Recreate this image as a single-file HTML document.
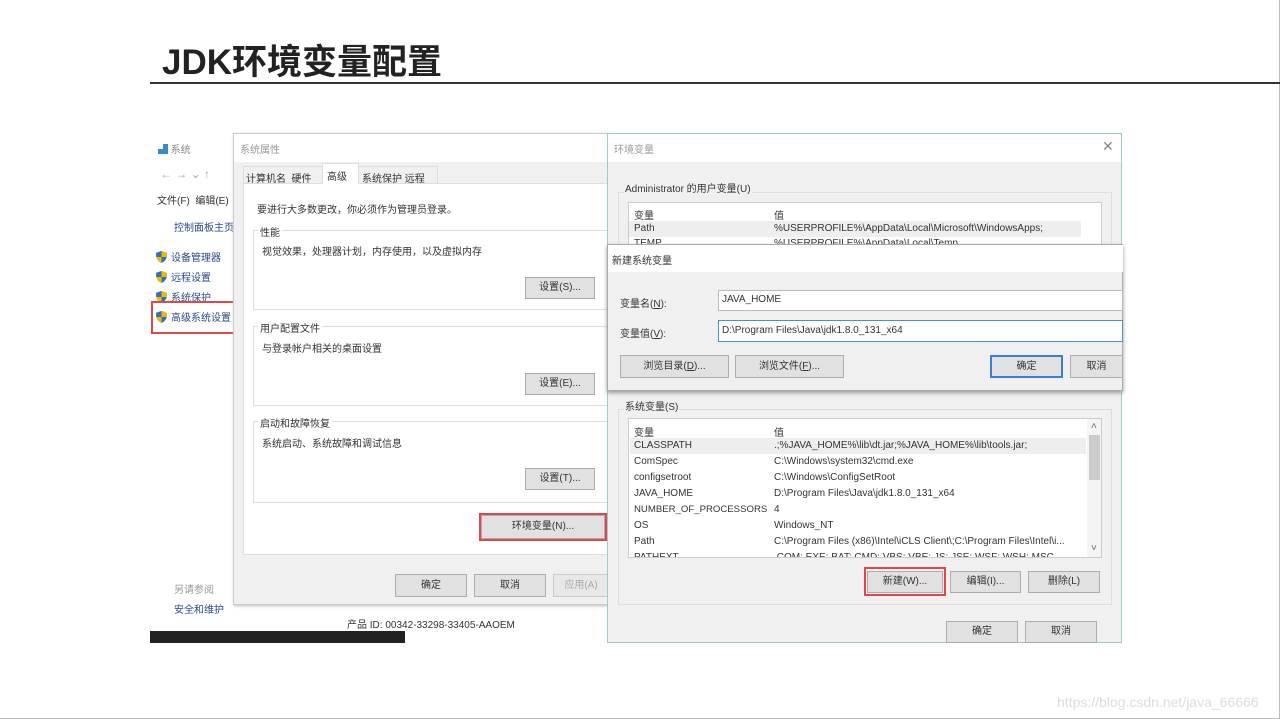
<!DOCTYPE html>
<html><head><meta charset="utf-8"><style>
*{margin:0;padding:0;box-sizing:border-box}
body{width:1280px;height:719px;position:relative;background:#fff;overflow:hidden;font-family:"Liberation Sans","Noto Sans CJK SC",sans-serif;font-size:10px;color:#222}
.a{position:absolute}
.btn{position:absolute;background:#e1e1e1;border:1px solid #adadad;text-align:center;font-size:10px;color:#333}
.t{position:absolute;white-space:nowrap;font-size:10px;color:#333}
.red{position:absolute;border:2px solid #e0474c}
.sh{display:inline-block;width:11px;height:12px;vertical-align:-2px;margin-right:4px}
</style></head><body>
<div class="a" style="left:0;top:0;width:1280px;height:719px;border:1px solid #bbb;border-left:none;border-top:none"></div>
<div class="t" style="left:162px;top:34px;font-size:35px;font-weight:bold;color:#222;letter-spacing:0px">JDK环境变量配置</div>
<div class="a" style="left:150px;top:82px;width:1130px;height:2px;background:#333"></div>

<!-- left panel -->
<div class="a" style="left:150px;top:133px;width:84px;height:510px;background:#fff"></div>
<div class="t" style="left:158px;top:141px;color:#888"><span style="color:#3a8ac8">▟</span> 系统</div>
<div class="t" style="left:160px;top:167px;color:#aaa;font-size:12px">← → ⌄ ↑</div>
<div class="t" style="left:157px;top:192px">文件(F)&nbsp; 编辑(E)</div>
<div class="t" style="left:174px;top:219px;color:#2a4a8a">控制面板主页</div>
<svg width="0" height="0" style="position:absolute"><defs><symbol id="s" viewBox="0 0 11 12"><path d="M5.5 0 L11 2 L10.5 7 Q9 10.5 5.5 12 Q2 10.5 0.5 7 L0 2 Z" fill="#2f6fc0"/><path d="M5.5 0 L11 2 L10.8 6 L5.5 6 Z" fill="#f2b800"/><path d="M0 2 L5.5 0 L5.5 6 L0.3 6Z" fill="#2f6fc0"/><path d="M0.3 6 L5.5 6 L5.5 12 Q2 10.5 0.5 7Z" fill="#f2b800"/></symbol></defs></svg>
<div class="t" style="left:156px;top:249px;color:#2a4a8a"><svg class="sh"><use href="#s"/></svg>设备管理器</div>
<div class="t" style="left:156px;top:269px;color:#2a4a8a"><svg class="sh"><use href="#s"/></svg>远程设置</div>
<div class="t" style="left:156px;top:289px;color:#2a4a8a"><svg class="sh"><use href="#s"/></svg>系统保护</div>
<div class="t" style="left:156px;top:309px;color:#2a4a8a"><svg class="sh"><use href="#s"/></svg>高级系统设置</div>
<div class="red" style="left:151px;top:301px;width:97px;height:33px"></div>
<div class="t" style="left:174px;top:581px;color:#999">另请参阅</div>
<div class="t" style="left:174px;top:601px;color:#2a4a8a">安全和维护</div>
<div class="a" style="left:150px;top:631px;width:255px;height:12px;background:#222"></div>
<div class="t" style="left:347px;top:616px">产品 ID: 00342-33298-33405-AAOEM</div>

<!-- system properties -->
<div class="a" style="left:233px;top:133px;width:376px;height:472px;background:#f0f0f0;border:1px solid #ccc;box-shadow:1px 1px 3px #bbb"></div>
<div class="a" style="left:234px;top:134px;width:374px;height:28px;background:#fff"></div>
<div class="t" style="left:240px;top:141px;color:#999">系统属性</div>
<div class="a" style="left:243px;top:183px;width:365px;height:372px;background:#fff;border:1px solid #ddd"></div>
<div class="a" style="left:243px;top:166px;width:195px;height:18px;background:#f0f0f0;border:1px solid #ddd"></div>
<div class="a" style="left:322px;top:163px;width:37px;height:21px;background:#fff;border:1px solid #ddd;border-bottom:none"></div>
<div class="t" style="left:246px;top:170px">计算机名&nbsp; 硬件</div>
<div class="t" style="left:327px;top:168px">高级</div>
<div class="t" style="left:362px;top:170px">系统保护 远程</div>
<div class="t" style="left:257px;top:201px">要进行大多数更改，你必须作为管理员登录。</div>
<div class="a" style="left:253px;top:230px;width:355px;height:80px;border:1px solid #ddd"></div>
<div class="t" style="left:258px;top:224px;background:#fff;padding:0 2px">性能</div>
<div class="t" style="left:262px;top:243px">视觉效果，处理器计划，内存使用，以及虚拟内存</div>
<div class="btn" style="left:525px;top:277px;width:70px;height:22px;line-height:20px">设置(S)...</div>
<div class="a" style="left:253px;top:326px;width:355px;height:80px;border:1px solid #ddd"></div>
<div class="t" style="left:258px;top:320px;background:#fff;padding:0 2px">用户配置文件</div>
<div class="t" style="left:262px;top:340px">与登录帐户相关的桌面设置</div>
<div class="btn" style="left:525px;top:373px;width:70px;height:22px;line-height:20px">设置(E)...</div>
<div class="a" style="left:253px;top:421px;width:355px;height:82px;border:1px solid #ddd"></div>
<div class="t" style="left:258px;top:415px;background:#fff;padding:0 2px">启动和故障恢复</div>
<div class="t" style="left:262px;top:435px">系统启动、系统故障和调试信息</div>
<div class="btn" style="left:525px;top:468px;width:70px;height:22px;line-height:20px">设置(T)...</div>
<div class="btn" style="left:481px;top:515px;width:124px;height:24px;line-height:22px">环境变量(N)...</div>
<div class="red" style="left:479px;top:513px;width:128px;height:28px"></div>
<div class="btn" style="left:395px;top:574px;width:72px;height:23px;line-height:21px">确定</div>
<div class="btn" style="left:474px;top:574px;width:72px;height:23px;line-height:21px">取消</div>
<div class="btn" style="left:553px;top:574px;width:56px;height:23px;line-height:21px;color:#aaa;background:#e8e8e8;border-color:#ccc">应用(A)</div>

<!-- env vars dialog -->
<div class="a" style="left:607px;top:133px;width:515px;height:510px;background:#f0f0f0;border:1px solid #9cc"></div>
<div class="a" style="left:608px;top:134px;width:513px;height:28px;background:#fff"></div>
<div class="t" style="left:614px;top:141px;color:#999">环境变量</div>
<div class="t" style="left:1102px;top:138px;color:#888;font-size:14px">✕</div>
<div class="a" style="left:618px;top:192px;width:494px;height:60px;border:1px solid #ddd"></div>
<div class="t" style="left:624px;top:180px;background:#f0f0f0;padding:0 1px">Administrator 的用户变量(U)</div>
<div class="a" style="left:628px;top:202px;width:474px;height:48px;background:#fff;border:1px solid #ccc"></div>
<div class="t" style="left:634px;top:207px">变量</div><div class="t" style="left:774px;top:207px">值</div>
<div class="a" style="left:629px;top:221px;width:452px;height:16px;background:#eee"></div>
<div class="t" style="left:634px;top:223px">Path</div><div class="t" style="left:774px;top:223px">%USERPROFILE%\AppData\Local\Microsoft\WindowsApps;</div>
<div class="t" style="left:634px;top:238px">TEMP</div><div class="t" style="left:774px;top:238px">%USERPROFILE%\AppData\Local\Temp</div>

<!-- new var dialog -->
<div class="a" style="left:607px;top:244px;width:516px;height:147px;background:#f0f0f0;border:1px solid #aaa;box-shadow:0 2px 4px #999"></div>
<div class="a" style="left:608px;top:245px;width:515px;height:27px;background:#fff"></div>
<div class="t" style="left:612px;top:252px">新建系统变量</div>
<div class="t" style="left:620px;top:295px">变量名(<u>N</u>):</div>
<div class="t" style="left:620px;top:325px">变量值(<u>V</u>):</div>
<div class="a" style="left:718px;top:290px;width:405px;height:21px;background:#fff;border:1px solid #bbb"></div>
<div class="t" style="left:722px;top:294px">JAVA_HOME</div>
<div class="a" style="left:718px;top:320px;width:405px;height:22px;background:#fff;border:1px solid #4a90d0"></div>
<div class="t" style="left:722px;top:325px">D:\Program Files\Java\jdk1.8.0_131_x64</div>
<div class="btn" style="left:620px;top:355px;width:109px;height:23px;line-height:21px">浏览目录(<u>D</u>)...</div>
<div class="btn" style="left:735px;top:355px;width:109px;height:23px;line-height:21px">浏览文件(<u>F</u>)...</div>
<div class="btn" style="left:990px;top:355px;width:73px;height:23px;line-height:19px;border:2px solid #3a80d0">确定</div>
<div class="btn" style="left:1070px;top:355px;width:53px;height:23px;line-height:21px">取消</div>

<!-- system vars -->
<div class="a" style="left:618px;top:409px;width:494px;height:196px;border:1px solid #ddd"></div>
<div class="t" style="left:624px;top:398px;background:#f0f0f0;padding:0 1px">系统变量(S)</div>
<div class="a" style="left:628px;top:418px;width:474px;height:140px;background:#fff;border:1px solid #ccc;overflow:hidden">
<div class="a" style="left:1px;top:19px;width:456px;height:16px;background:#eee"></div>
<div class="a" style="left:458px;top:0;width:15px;height:140px;background:#f4f4f4"></div>
<div class="a" style="left:460px;top:16px;width:11px;height:45px;background:#ccc"></div>
<div class="t" style="left:462px;top:2px;color:#666">˄</div><div class="t" style="left:462px;top:124px;color:#666">˅</div>
<div class="t" style="left:5px;top:133px">PATHEXT</div><div class="t" style="left:145px;top:133px">.COM;.EXE;.BAT;.CMD;.VBS;.VBE;.JS;.JSE;.WSF;.WSH;.MSC</div>
</div>
<div class="t" style="left:634px;top:424px">变量</div><div class="t" style="left:774px;top:424px">值</div>
<div class="t" style="left:634px;top:440px">CLASSPATH</div><div class="t" style="left:774px;top:440px">.;%JAVA_HOME%\lib\dt.jar;%JAVA_HOME%\lib\tools.jar;</div>
<div class="t" style="left:634px;top:456px">ComSpec</div><div class="t" style="left:774px;top:456px">C:\Windows\system32\cmd.exe</div>
<div class="t" style="left:634px;top:472px">configsetroot</div><div class="t" style="left:774px;top:472px">C:\Windows\ConfigSetRoot</div>
<div class="t" style="left:634px;top:488px">JAVA_HOME</div><div class="t" style="left:774px;top:488px">D:\Program Files\Java\jdk1.8.0_131_x64</div>
<div class="t" style="left:634px;top:504px;font-size:9.6px">NUMBER_OF_PROCESSORS</div><div class="t" style="left:774px;top:504px">4</div>
<div class="t" style="left:634px;top:520px">OS</div><div class="t" style="left:774px;top:520px">Windows_NT</div>
<div class="t" style="left:634px;top:536px">Path</div><div class="t" style="left:774px;top:536px">C:\Program Files (x86)\Intel\iCLS Client\;C:\Program Files\Intel\i...</div>
<div class="btn" style="left:867px;top:571px;width:76px;height:22px;line-height:20px">新建(W)...</div>
<div class="red" style="left:864px;top:567px;width:82px;height:29px"></div>
<div class="btn" style="left:950px;top:571px;width:71px;height:22px;line-height:20px">编辑(I)...</div>
<div class="btn" style="left:1028px;top:571px;width:72px;height:22px;line-height:20px">删除(L)</div>
<div class="btn" style="left:946px;top:621px;width:72px;height:22px;line-height:20px">确定</div>
<div class="btn" style="left:1025px;top:621px;width:72px;height:22px;line-height:20px">取消</div>

<div class="t" style="left:1057px;top:694px;font-size:14px;color:#ddd">https://blog.csdn.net/java_66666</div>
</body></html>
